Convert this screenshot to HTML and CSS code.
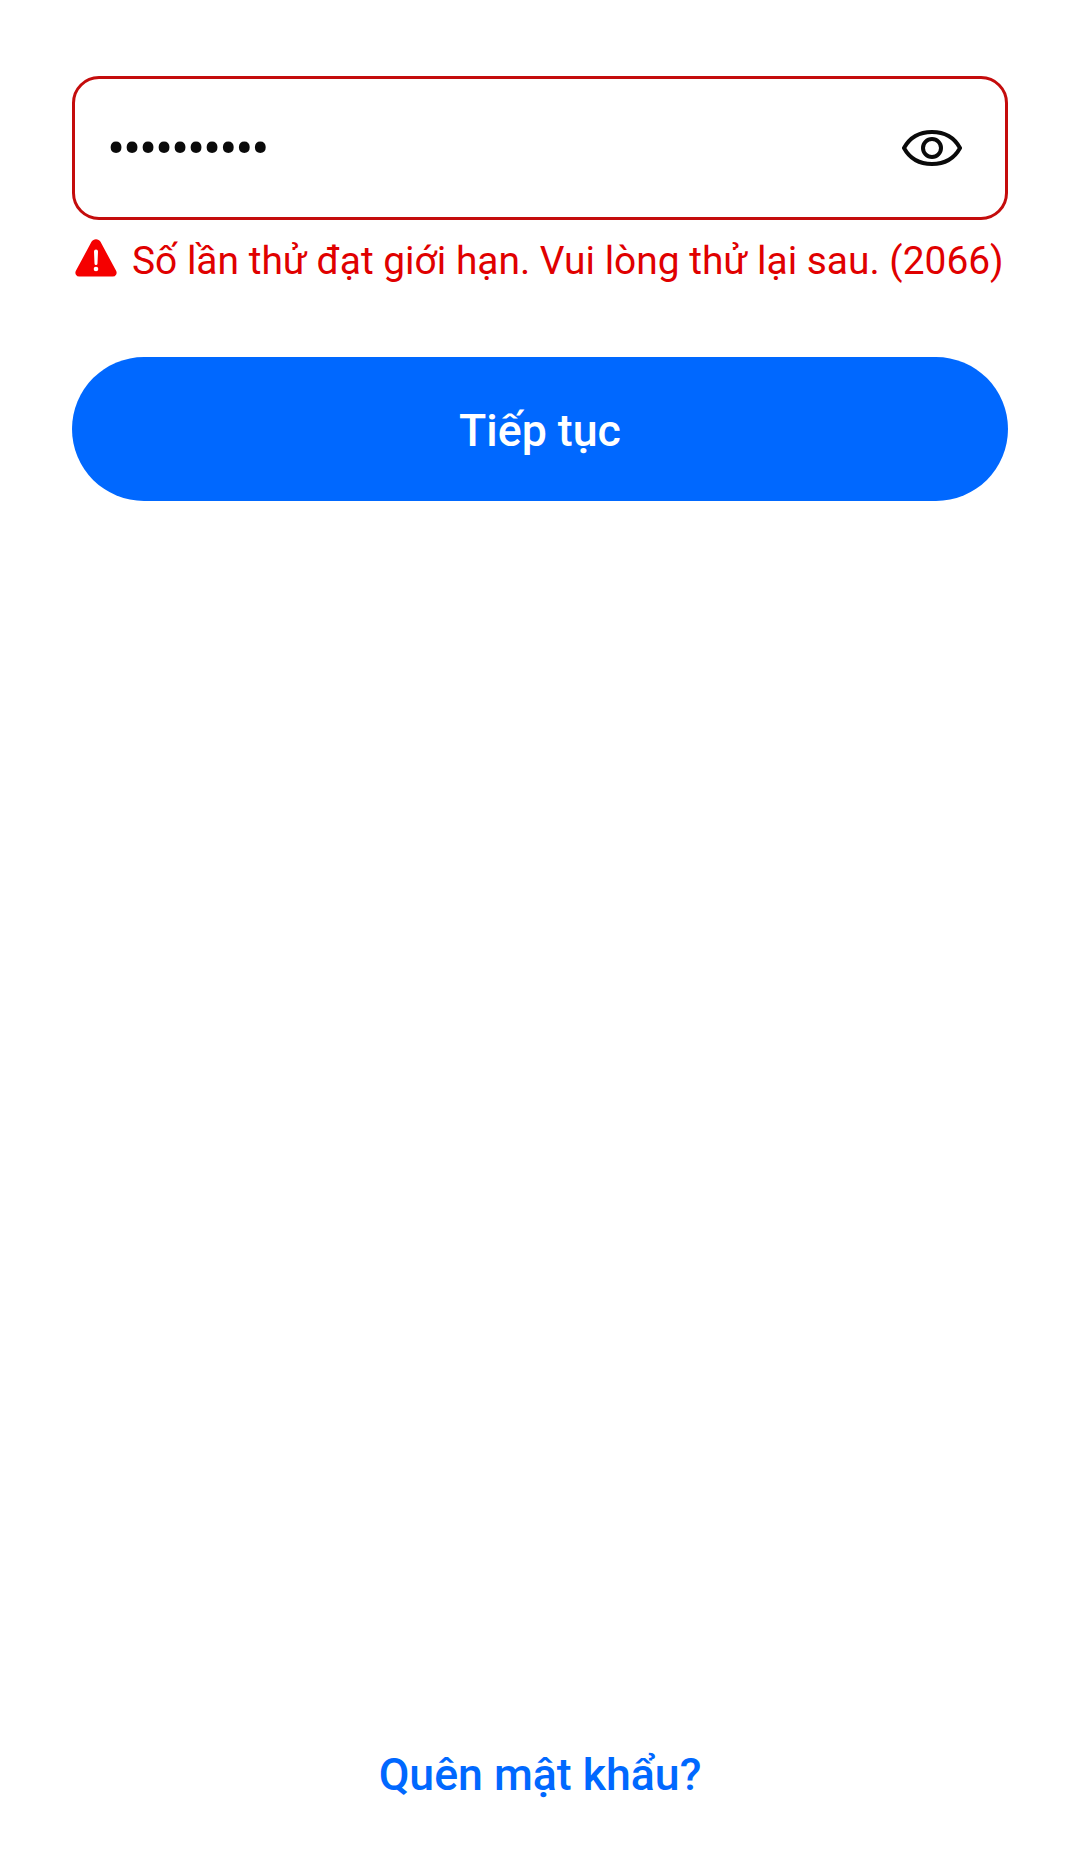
FILE: index.html
```html
<!DOCTYPE html>
<html lang="vi">
<head>
<meta charset="utf-8">
<title>Mật khẩu</title>
<link rel="stylesheet" href="styles.css">
</head>
<body>
<main class="page">
  <div class="top">
    <div class="field">
      <span class="dots">••••••••••</span>
      <svg class="eye" viewBox="0 0 60 36" aria-hidden="true">
        <path d="M2 18C8 7 18 2 30 2s22 5 28 16c-6 11-16 16-28 16S8 29 2 18Z"/>
        <circle cx="30" cy="18" r="9"/>
      </svg>
    </div>
    <div class="error">
      <svg class="warn" viewBox="0 0 42 38" aria-hidden="true">
        <path class="warn-bg" d="M16.500 2.800a5.200 5.200 0 0 1 9 0l15.600 29a3.900 3.900 0 0 1-3.400 5.800H4.300a3.900 3.900 0 0 1-3.400-5.800Z"/>
        <path class="warn-mark" d="M19 12.500a2 2 0 0 1 4 0l-.5 12a1.500 1.500 0 0 1-3 0Z"/>
        <circle class="warn-mark" cx="21" cy="30" r="2.300"/>
      </svg>
      <span class="error-text">Số lần thử đạt giới hạn. Vui lòng thử lại sau. (2066)</span>
    </div>
    <button class="primary" type="button"><span class="primary-label">Tiếp tục</span></button>
  </div>
  <a class="forgot" href="#">Quên mật khẩu?</a>
</main>
</body>
</html>
```

FILE: styles.css
```css
* { box-sizing: border-box; }
html, body { margin: 0; padding: 0; background: #fff; }
body { font-family: Roboto, "Noto Sans", sans-serif; }
.page {
  width: 1080px;
  height: 1875px;
  padding: 76px 72px 0;
  display: flex;
  flex-direction: column;
  justify-content: space-between;
}
.top { display: flex; flex-direction: column; }
.field {
  height: 144px;
  border: 3px solid #c40c0c;
  border-radius: 27px;
  display: flex;
  align-items: center;
  justify-content: space-between;
  padding: 0 43px 0 32px;
}
.dots {
  font-size: 54px;
  line-height: 1;
  letter-spacing: -2.200px;
  color: #0a0a0a;
  transform: translateY(1px);
}
.eye { width: 60px; height: 36px; fill: none; stroke: #0a0a0a; stroke-width: 4; }
.error {
  display: flex;
  align-items: center;
  height: 56px;
  margin-top: 12px;
  padding-left: 3px;
  gap: 15px;
}
.warn { width: 42px; height: 38px; flex: none; margin-top: -5px; }
.warn-bg { fill: #f50000; }
.warn-mark { fill: #fff; }
.error-text { font-size: 38.9px; color: #e00000; white-space: nowrap; }
.primary {
  height: 144px;
  margin-top: 69px;
  border: 0;
  border-radius: 72px;
  background: #0068ff;
  color: #fff;
  font: 500 44.700px Roboto, sans-serif;
}
.primary-label { display: block; padding-top: 3px; }
.forgot {
  align-self: center;
  margin-bottom: 64px;
  font-size: 44.600px;
  line-height: 72px;
  font-weight: 500;
  color: #0068ff;
  text-decoration: none;
}
```
